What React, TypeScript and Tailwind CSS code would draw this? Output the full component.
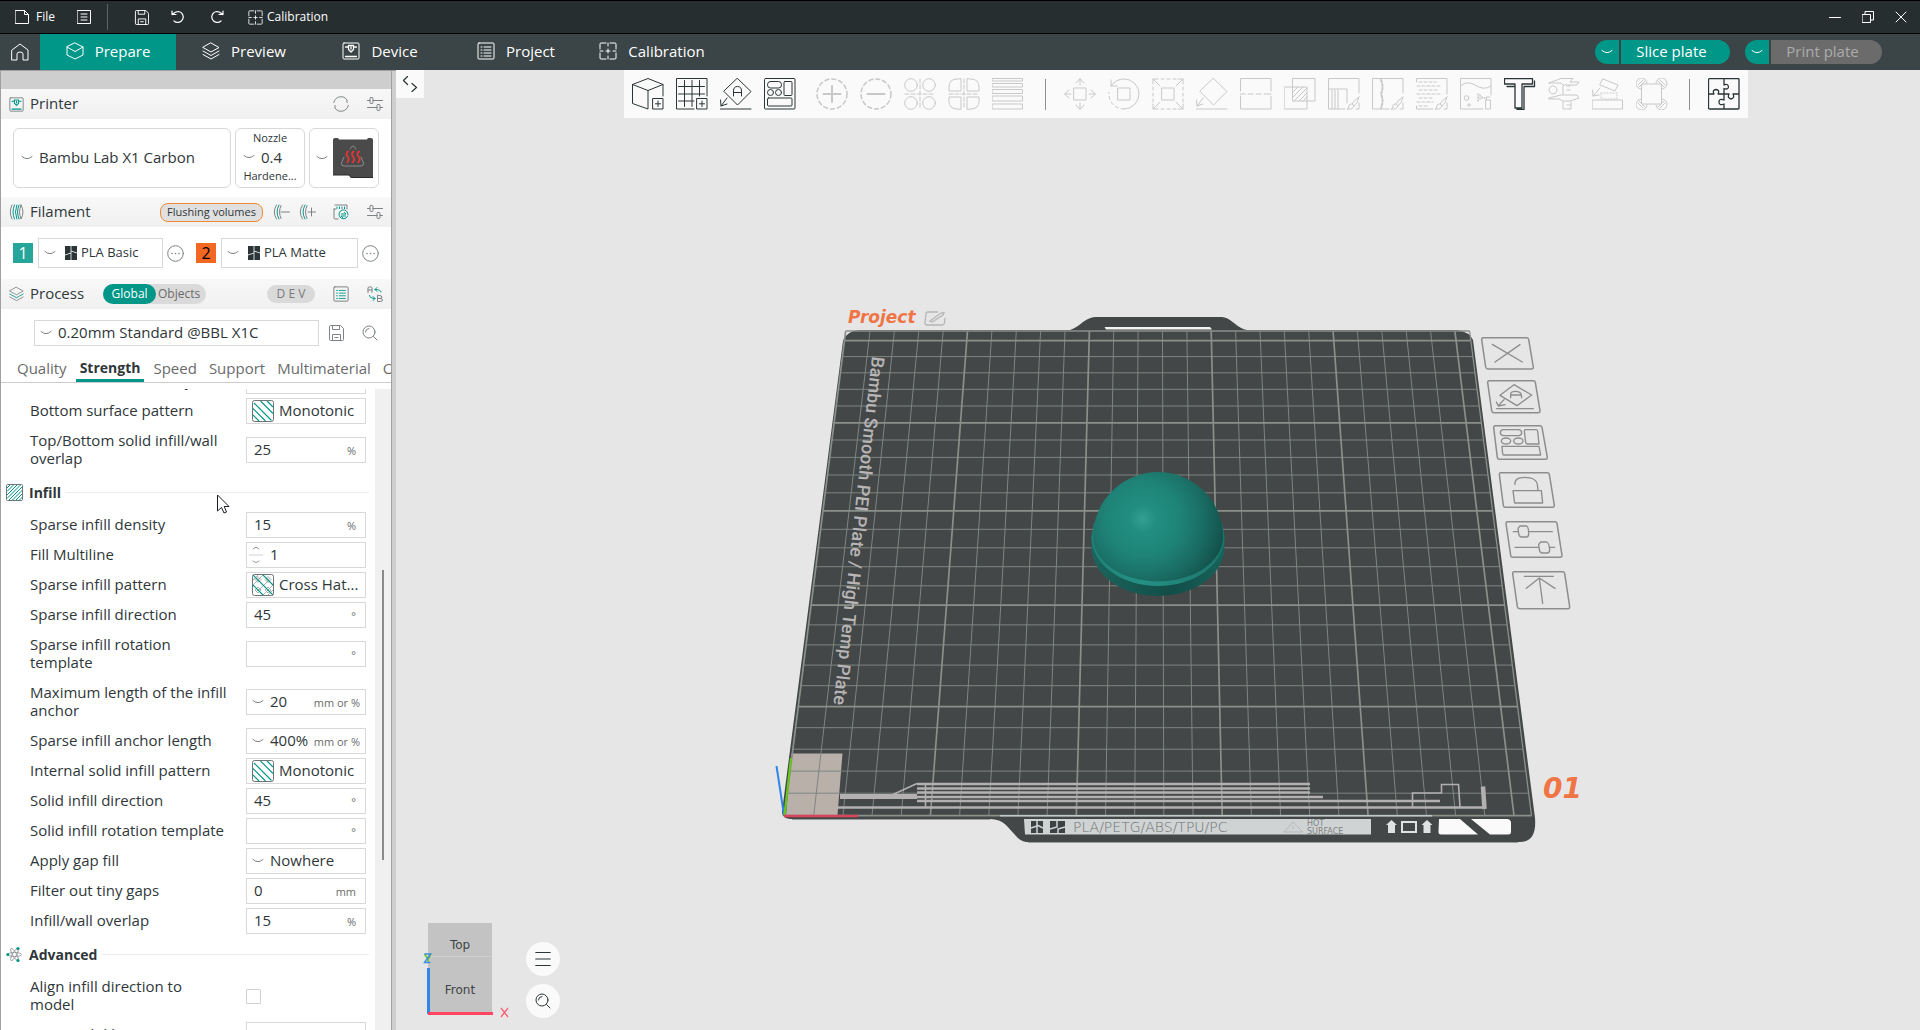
import React, { useState } from 'react';

type IconProps = { className?: string };

/* ---------- small icons ---------- */

const Svg: React.FC<{ box: string; className?: string; sw?: number; children: React.ReactNode }> = ({ box, className, sw = 1, children }) => (
  <svg viewBox={box} className={className} fill="none" stroke="currentColor" strokeWidth={sw} strokeLinecap="round" strokeLinejoin="round" aria-hidden="true">
    {children}
  </svg>
);

const Chevron: React.FC<IconProps> = ({ className = 'w-3 h-2 text-[#7d8385]' }) => (
  <Svg box="0 0 12 8" className={className}><path d="M1 2.5 Q6 7 11 2.5" /></Svg>
);

const SaveIcon: React.FC<IconProps> = ({ className }) => (
  <Svg box="0 0 16 16" className={className}><path d="M1.5 1.5Q1.5 .5 2.5 .5H12.500L15.500 3.500V14.500Q15.500 15.500 14.500 15.500H2.500Q1.500 15.500 1.500 14.500ZM4.500 15.500V9.500H12.500V15.500M4.500 .5V4.500H11.500V.5M7 12.500H10" /></Svg>
);

const CalibrationIcon: React.FC<IconProps> = ({ className }) => (
  <Svg box="0 0 18 18" className={className}>
    <path d="M7 1H2Q1 1 1 2V7M11 1H16Q17 1 17 2V7M1 11V16Q1 17 2 17H7M17 11V16Q17 17 16 17H11M9 1V4M9 14V17M1 9H4M14 9H17M9 7V11M7 9H11" />
  </Svg>
);

const PrinterIcon: React.FC<{ className?: string; head?: string }> = ({ className, head = 'currentColor' }) => (
  <Svg box="0 0 18 18" className={className}>
    <rect x="1" y="1" width="16" height="16" rx="1" />
    <path stroke={head} strokeWidth="1.300" d="M3.500 5H6.500M11.500 5H14.500M6.500 3.500H11.500V7.500L9 10L6.500 7.500ZM9 5V7M3.500 14.500H14.500" />
  </Svg>
);

const LayersIcon: React.FC<{ className?: string; low?: string }> = ({ className, low = 'currentColor' }) => (
  <Svg box="0 0 18 18" className={className}>
    <path d="M9 1L17 5.500L9 10L1 5.500Z" />
    <path stroke={low} d="M1 9L9 13.500L17 9" />
    <path d="M1 12.500L9 17L17 12.500" />
  </Svg>
);

const ListIcon: React.FC<{ className?: string; line?: string }> = ({ className, line = 'currentColor' }) => (
  <Svg box="0 0 18 18" className={className}>
    <rect x="1" y="1" width="16" height="16" rx="1" />
    <path stroke={line} d="M4 5H5M7 5H14M4 8H5M7 8H14M4 11H5M7 11H14M4 14H5M7 14H14" />
  </Svg>
);

const SlidersIcon: React.FC<IconProps> = ({ className }) => (
  <Svg box="0 0 16 16" className={className}>
    <path d="M.5 4.500H3M6 4.500H15.500M.5 11.500H10M13 11.500H15.500" />
    <rect x="3" y="1.500" width="3" height="6" rx="1" />
    <rect x="10" y="8.500" width="3" height="6" rx="1" />
  </Svg>
);

const SearchIcon: React.FC<IconProps> = ({ className }) => (
  <Svg box="0 0 16 16" className={className}>
    <circle cx="7" cy="7" r="6" />
    <path d="M11.500 11.500L15 15M3.500 7Q3.500 3.500 7 3.500" />
  </Svg>
);

const MoreIcon: React.FC<IconProps> = ({ className = 'size-[17px] text-[#7d8385]' }) => (
  <Svg box="0 0 17 17" className={className}>
    <circle cx="8.500" cy="8.500" r="7.800" />
    <path strokeWidth="1.500" d="M5 8.500H5.100M8.500 8.500H8.600M12 8.500H12.100" />
  </Svg>
);

const BambuMark: React.FC<IconProps> = ({ className = 'w-3 h-[14px]' }) => (
  <svg viewBox="0 0 12 14" className={className} aria-hidden="true">
    <rect width="12" height="14" fill="#2b3436" />
    <path d="M6 0V14M0 9L6 7M6 5L12 7" stroke="#fff" strokeWidth=".8" fill="none" />
  </svg>
);

const FilamentIcon: React.FC<IconProps> = ({ className }) => (
  <Svg box="0 0 15 16" className={className}>
    <path d="M3 1Q-.5 8 3 15M12 1Q16 8 12 15Q9 8 12 1" />
    <path stroke="#009688" d="M5.500 1Q2.500 8 5.500 15M7.800 1Q5 8 7.800 15M10 1Q7 8 10 15" />
  </Svg>
);

const FilamentEditIcon: React.FC<{ className?: string; plus?: boolean }> = ({ className, plus }) => (
  <Svg box="0 0 17 16" className={className}>
    <path d="M3.500 1Q-1 8 3.500 15" />
    <path stroke="#009688" d="M6 1Q2 8 6 15" />
    <path d={plus ? 'M8 1.500Q5 8 8 14.500M9 8H16.500M12.500 4V12' : 'M8 1.500Q5 8 8 14.500M8 8H16.500'} />
  </Svg>
);

const MonotonicIcon: React.FC<IconProps> = ({ className = 'size-[22px] shrink-0' }) => (
  <svg viewBox="0 0 22 22" className={className} fill="none" aria-hidden="true">
    <path stroke="#009688" strokeWidth="1.100" d="M1 15L7 21M1 8.500L13.500 21M2 3L19.500 20.500M8.500 1L21 13.500M15 1L21 7" />
    <rect x=".5" y=".5" width="21" height="21" rx="2" stroke="#6f7577" />
  </svg>
);

const CrossHatchIcon: React.FC<IconProps> = ({ className = 'size-[22px] shrink-0' }) => (
  <svg viewBox="0 0 22 22" className={className} fill="none" aria-hidden="true">
    <path stroke="#9a9fa0" strokeWidth=".8" d="M1 6L6 1M1 11L11 1M6 17L17 6M11 21L21 11M16 21L21 16M6 2.500L9 5.500L6 8.500L3 5.500ZM16 2.500L19 5.500L16 8.500L13 5.500ZM6 13L9 16L6 19L3 16ZM16 13L19 16L16 19L13 16ZM6 4.500L7 5.500L6 6.500L5 5.500ZM16 4.500L17 5.500L16 6.500L15 5.500ZM6 15L7 16L6 17L5 16ZM16 15L17 16L16 17L15 16Z" />
    <path stroke="#009688" strokeWidth="1.100" d="M1 1L21 21M11 1L21 11M1 11L11 21" />
    <rect x=".5" y=".5" width="21" height="21" rx="2" stroke="#6f7577" />
  </svg>
);

const InfillIcon = () => (
  <svg viewBox="0 0 17 17" className="size-[17px]" fill="none" aria-hidden="true">
    <path stroke="#009688" d="M1 4L4 1M1 7.500L7.500 1M1 11L11 1M1 14.500L14.500 1M2 17L17 2M5.500 17L17 5.500M9 17L17 9M12.500 17L17 12.500" />
    <rect x=".5" y=".5" width="16" height="16" rx="1" stroke="#6f7577" />
  </svg>
);

const AdvancedIcon = () => (
  <svg viewBox="0 0 17 17" className="size-[17px]" fill="none" stroke="#8b9092" strokeWidth=".8" aria-hidden="true">
    <ellipse cx="8.500" cy="8.500" rx="7" ry="2" />
    <ellipse cx="8.500" cy="8.500" rx="7" ry="2" transform="rotate(60 8.500 8.500)" />
    <ellipse cx="8.500" cy="8.500" rx="7" ry="2" transform="rotate(120 8.500 8.500)" />
    <g fill="#009688" stroke="none">
      <circle cx="1.800" cy="8.500" r="1.600" />
      <circle cx="12" cy="2.500" r="1.600" />
      <circle cx="12" cy="14.500" r="1.600" />
    </g>
  </svg>
);

/* ---------- toolbar drawings, all on a 32 grid ---------- */

const brush = 'M31 19Q26 22 24 26L26 28Q30 25 31 19M24 26Q20 26 21 29Q21 31 19 31Q25 32 26 28';
const tools: { name: string; on?: boolean; art: React.ReactNode }[][] = [
  [
    { name: 'Add model', on: true, art: <path d="M.5 6.500L16 .5L31 6.500V18M.5 6.500V25.500L16 31V12.500M.5 6.500L16 12.500L31 6.500M21 20.500H31V31H21ZM26 23V28.500M23.500 25.800H28.500" /> },
    { name: 'Add plate', on: true, art: <path d="M31 18V.5H.5V31H18M8.500 2.500V28.500M16 2.500V28.500M23.500 2.500V18M2.500 8.500H28.500M2.500 16H28.500M2.500 23H18M21 20.500H31V31H21ZM26 23V28.500M23.500 25.800H28.500" /> },
    { name: 'Auto orient', on: true, art: <path d="M17.500 .5L31 13.500L17.500 27L4 13.500ZM13.500 18V13Q13.500 8.500 17.500 8.500Q21.500 8.500 21.500 13V18M13.500 14.500H21.500M.5 31H31M7 20L1 28M.5 22L1 28L7 26" /> },
    { name: 'Arrange', on: true, art: <><rect x=".5" y=".5" width="30.500" height="30.500" rx="1" /><rect x="3.500" y="3.500" width="14" height="6.500" rx="3" /><rect x="20" y="3.500" width="8" height="14" rx="1" /><circle cx="6.500" cy="14.500" r="3" /><circle cx="14.500" cy="14.500" r="3" /><rect x="3.500" y="20" width="24.500" height="8" rx="1" /></> },
  ],
  [
    { name: 'Add instance', art: <><circle cx="16" cy="16" r="15" strokeDasharray="4 3" strokeWidth="1.500" /><path strokeWidth="2" d="M16 8V24M7.500 16H24.500" /></> },
    { name: 'Remove instance', art: <><circle cx="16" cy="16" r="15" strokeDasharray="4 3" strokeWidth="1.500" /><path strokeWidth="2" d="M7.500 16H24.500" /></> },
    { name: 'Split to objects', art: <><circle cx="7" cy="7" r="6.300" /><circle cx="25" cy="7" r="6.300" /><circle cx="7" cy="25" r="6.300" /><circle cx="25" cy="25" r="6.300" /><path strokeDasharray="4 2" d="M16 1V31M1 16H31" /></> },
    { name: 'Split to parts', art: <><path d="M13 1V13H1V9Q1 1 9 1ZM19 1V13H31V9Q31 1 23 1ZM13 31V19H1V23Q1 31 9 31ZM19 31V19H31V23Q31 31 23 31Z" /><path strokeDasharray="4 2" d="M16 1V31M1 16H31" /></> },
    { name: 'Variable layer height', art: <><rect x=".5" y=".5" width="30" height="2.500" /><rect x=".5" y="5.500" width="30" height="3.500" /><rect x=".5" y="11.500" width="30" height="4" /><rect x=".5" y="18" width="30" height="5" /><rect x=".5" y="26" width="30" height="5" /></> },
  ],
  [
    { name: 'Move', art: <path d="M10 10H22V22H10ZM16 7V1M12 5L16 .5L20 5M16 25V31M12 27L16 31.500L20 27M7 16H1M5 12L.5 16L5 20M25 16H31M27 12L31.500 16L27 20" /> },
    { name: 'Rotate', art: <><path d="M10 10H22V22H10ZM3 8Q8 1 16 1A15 15 0 0 1 16 31M3 2V8H9" /><path strokeDasharray="3 3" d="M16 31A15 15 0 0 1 1 14" /></> },
    { name: 'Scale', art: <><path d="M10 10H22V22H10ZM8 8L1 1M1 6V1H6M24 8L31 1M26 1H31V6M8 24L1 31M1 26V31H6M24 24L31 31M26 31H31V26" /><path strokeDasharray="3 3" d="M9 1H24M9 31H24M1 9V24M31 9V24" /></> },
    { name: 'Lay on face', art: <path d="M17.500 .5L31 13.500L17.500 27L4 13.500ZM.5 31H31M7 20L1 28M.5 22L1 28L7 26" /> },
    { name: 'Cut', art: <path d="M.5 13V.5H31V13M.5 18V31H31V18M.5 16H5M8 16H13M16 16H21M24 16H31" /> },
    { name: 'Mesh boolean', art: <path d="M8.500 9V.5H31V23H23M.5 9H23V31H.5ZM8.500 9V23H23M9 14L14 9M9 19L19 9M10 23L23 10M15 23L23 15M19 23L23 19" /> },
    { name: 'Support painting', art: <path d={'M31 15V.5H.5V31H17M.5 11H19V25M4 12V31M7 12V31M10 12V31M31 25V31H28' + brush} /> },
    { name: 'Seam painting', art: <><path d={'M31 15V.5H.5V31H17M31 25V31H28' + brush} /><path strokeDasharray="2 2" d="M9 2Q12 9 9 16Q12 23 9 30" strokeWidth="2" /></> },
    { name: 'Fuzzy skin', art: <><path d={'M.5 4V.5H31V16M.5 28V31H17M31 25V31H28' + brush} /><path strokeDasharray="3 2" d="M3 4H20M1 8H26M3 12H22M1 16H24M3 20H18M1 24H17M3 28H12" /></> },
    { name: 'Colour painting', art: <><path d="M31 17V.5H.5V31H23M.5 8Q7 2 15 7Q24 13 31 8M26 22H30.500V31H26ZM26.500 22V19H30" /><circle cx="6.500" cy="20" r="2.300" /><circle cx="9" cy="27" r="1.200" /><path strokeDasharray="1 2" d="M18 16V24M20 17V23M22 19V21M24 20H25" strokeWidth="1.500" /></> },
    { name: 'Text', on: true, art: <path strokeWidth="1.300" d="M.5 .5H28.500V6H18V30H11V6H.5ZM30.500 3V8.500H20M20 8.500V31.500H13M3 8.500H11" /> },
    { name: 'Measure', art: <path d="M1 5L13 .5H25L22 4H31L29 7H15L13 5H1ZM1 20L13 17H29L31 20L22 23H14L12 21H1ZM15 8V16M15 24V31H18M22 31H23V24M19 8H22M19 12H22M19 27H22M19 31H22M4 8A4 4 0 1 0 6 8Z" /> },
    { name: 'Assembly cut', art: <><path d="M.5 22H30.500V31H.5ZM11 1L26 7L23 13L8 7ZM8 10L1 18M.5 12L1 18L7 17" /><rect x="9" y="15" width="16" height="6" strokeDasharray="1 2" /></> },
    { name: 'Brim ears', art: <><rect x="5.500" y="6" width="20" height="20" rx="1" /><path d="M5 11A5.500 5.500 0 1 1 11 5M20 5A5.500 5.500 0 1 1 26 11M26 21A5.500 5.500 0 1 1 20 27M11 27A5.500 5.500 0 1 1 5 21M2 7L7 2M24 2L29 7M24 30L29 25M2 25L7 30M3 9L9 3M22 3L28 9M22 29L28 23M3 23L9 29" /></> },
  ],
  [
    { name: 'Assembly view', on: true, art: <path strokeWidth="1.300" d="M2 .5H30Q31 .5 31 1.500V30.500Q31 31 30 31H2Q.5 31 .5 30V2Q.5 .5 2 .5ZM16 .5V7Q20 5 20.500 9Q20 12 16 10.500V16M.5 16H6Q4 12 8 11.500Q12 12 10 16H21Q19 20 23 21Q27 20 25 16H31M16 16V22Q11 20 11 24Q11 28 16 26V31" /> },
  ],
];

/* ---------- top bars ---------- */

const TitleBar = () => (
  <header className="flex h-[34px] items-center border-y border-black bg-[#262e30] text-xs text-white">
    <button className="ml-[15px] flex items-center gap-[7px]">
      <Svg box="0 0 14 14" className="size-[14px]"><path d="M.5 .5H9.500L13.500 4.500V13.500H.5ZM9.500 .5V4.500H13.500" /></Svg>
      File
    </button>
    <button aria-label="Menu" className="ml-[22px]">
      <Svg box="0 0 14 14" className="size-[14px]"><path d="M.5 .5H13.500V13.500H.5ZM4 4H10M4 7H10M4 10H10" /></Svg>
    </button>
    <div className="ml-4 h-[26px] w-px bg-[#5d6466]" />
    <button aria-label="Save" className="ml-[26px]"><SaveIcon className="size-[15px]" /></button>
    <button aria-label="Undo" className="ml-[22px]">
      <Svg box="0 0 14 14" className="size-[14px]" sw={1.2}><path d="M1 1V4.500H5M1.500 4.500Q4 1.500 7.500 1.500A5.500 5.500 0 1 1 3 11" /></Svg>
    </button>
    <button aria-label="Redo" className="ml-[25px]">
      <Svg box="0 0 14 14" className="size-[14px]" sw={1.2}><path d="M13 1V4.500H9M12.500 4.500Q10 1.500 6.500 1.500A5.500 5.500 0 1 0 11 11" /></Svg>
    </button>
    <button className="ml-6 flex items-center gap-1"><CalibrationIcon className="size-[15px]" />Calibration</button>
    <div className="ml-auto mr-[13px] flex items-center gap-[21px]">
      <button aria-label="Minimize"><Svg box="0 0 12 12" className="size-3"><path d="M.5 6.500H11.500" /></Svg></button>
      <button aria-label="Restore"><Svg box="0 0 12 12" className="size-3"><path d="M.5 3.500H8.500V11.500H.5ZM3 3V.5H11.500V9H9" /></Svg></button>
      <button aria-label="Close"><Svg box="0 0 12 12" className="size-3"><path d="M1 1L11 11M11 1L1 11" /></Svg></button>
    </div>
  </header>
);

const NavBar = () => {
  const [active, setActive] = useState('Prepare');
  const tabs = [
    { name: 'Prepare', icon: <Svg box="0 0 18 18" className="size-[18px]"><path d="M9 1L17 5V13L9 17L1 13V5ZM1 5L9 9.500L17 5" /></Svg> },
    { name: 'Preview', icon: <LayersIcon className="size-[18px]" /> },
    { name: 'Device', icon: <PrinterIcon className="size-[18px]" /> },
    { name: 'Project', icon: <ListIcon className="size-[18px]" /> },
    { name: 'Calibration', icon: <CalibrationIcon className="size-[18px]" /> },
  ];

  return (
    <nav className="flex h-9 items-stretch bg-[#3b4446] text-[15px] text-white">
      <button aria-label="Home" className="flex w-10 items-center justify-center pb-px">
        <Svg box="0 0 18 18" className="size-[18px]"><path d="M1 7L9 1L17 7V17H12V11Q12 9 9 9Q6 9 6 11V17H1Z" /></Svg>
      </button>
      {tabs.map((t) => (
        <button
          key={t.name}
          onClick={() => setActive(t.name)}
          className={`flex w-[136px] items-center justify-center gap-[11px] pb-0.5 ${active === t.name ? 'bg-[#009688]' : ''}`}
        >
          {t.icon}
          {t.name}
        </button>
      ))}
      <div className="ml-auto mr-[38px] flex items-center gap-[15px]">
        <div className="flex h-6 gap-0.5">
          <button aria-label="Slice options" className="flex w-6 items-center justify-center rounded-l-full bg-[#009688]"><Chevron className="h-2 w-3" /></button>
          <button className="w-[109px] rounded-r-full bg-[#009688] pb-0.5 pr-2 leading-[22px]">Slice plate</button>
        </div>
        <div className="flex h-6 gap-0.5">
          <button aria-label="Print options" className="flex w-6 items-center justify-center rounded-l-full bg-[#009688]"><Chevron className="h-2 w-3" /></button>
          <button className="w-[111px] rounded-r-full bg-[#6b6b6b] pb-0.5 pr-2 leading-[22px] text-[#acacac]">Print plate</button>
        </div>
      </div>
    </nav>
  );
};

/* ---------- sidebar ---------- */

const SectionBar: React.FC<{ icon: React.ReactNode; title: string; children: React.ReactNode }> = ({ icon, title, children }) => (
  <div className="flex h-[30px] shrink-0 items-center bg-linear-to-b from-[#f8f8f8] to-[#f0f0f0] pl-2 pr-2">
    <span className="flex w-[15px] justify-center">{icon}</span>
    <h2 className="ml-1.5 pb-0.5">{title}</h2>
    {children}
  </div>
);

const FilamentSlot: React.FC<{ no: string; name: string; swatch: string; width: string }> = ({ no, name, swatch, width }) => (
  <>
    <button className={`size-5 text-base leading-5 ${swatch}`}>{no}</button>
    <div className={`relative ml-[5px] flex h-[30px] items-center border border-[#d8d8d8] ${width}`}>
      <Chevron className="pointer-events-none absolute left-[5px] h-2 w-3 text-[#7d8385]" />
      <BambuMark className="pointer-events-none absolute left-[26px] h-[14px] w-3" />
      <select aria-label={`Filament ${no}`} className="h-full w-full appearance-none bg-transparent pl-[42px] text-[13px] outline-none">
        <option>{name}</option>
      </select>
    </div>
    <button aria-label={`Edit filament ${no}`} className="ml-1"><MoreIcon /></button>
  </>
);

type Row = {
  label: string;
  kind: 'text' | 'combo' | 'pattern' | 'spin' | 'check' | 'select';
  value?: string;
  unit?: string;
  art?: React.ReactNode;
  tall?: boolean;
};

const surfaceRows: Row[] = [
  { label: 'Bottom surface density', kind: 'text', value: '100', unit: '%' },
  { label: 'Bottom surface pattern', kind: 'pattern', value: 'Monotonic', art: <MonotonicIcon /> },
  { label: 'Top/Bottom solid infill/wall overlap', kind: 'text', value: '25', unit: '%', tall: true },
];

const infillRows: Row[] = [
  { label: 'Sparse infill density', kind: 'text', value: '15', unit: '%' },
  { label: 'Fill Multiline', kind: 'spin', value: '1' },
  { label: 'Sparse infill pattern', kind: 'pattern', value: 'Cross Hat...', art: <CrossHatchIcon /> },
  { label: 'Sparse infill direction', kind: 'text', value: '45', unit: '°' },
  { label: 'Sparse infill rotation template', kind: 'text', value: '', unit: '°', tall: true },
  { label: 'Maximum length of the infill anchor', kind: 'combo', value: '20', unit: 'mm or %', tall: true },
  { label: 'Sparse infill anchor length', kind: 'combo', value: '400%', unit: 'mm or %' },
  { label: 'Internal solid infill pattern', kind: 'pattern', value: 'Monotonic', art: <MonotonicIcon /> },
  { label: 'Solid infill direction', kind: 'text', value: '45', unit: '°' },
  { label: 'Solid infill rotation template', kind: 'text', value: '', unit: '°' },
  { label: 'Apply gap fill', kind: 'select', value: 'Nowhere' },
  { label: 'Filter out tiny gaps', kind: 'text', value: '0', unit: 'mm' },
  { label: 'Infill/wall overlap', kind: 'text', value: '15', unit: '%' },
];

const advancedRows: Row[] = [
  { label: 'Align infill direction to\nmodel', kind: 'check', tall: true },
  { label: 'Insert solid layers', kind: 'text', value: '' },
];

const SettingRow: React.FC<{ row: Row }> = ({ row }) => {
  const id = row.label.toLowerCase().replace(/[^a-z]+/g, '-');
  const { kind, value, unit, art } = row;

  return (
    <div className={`flex shrink-0 items-center pl-[29px] ${row.tall ? 'h-12' : 'h-[30px]'}`}>
      <label htmlFor={id} className="w-[216px] shrink-0 whitespace-pre-line pb-0.5 pr-3 leading-[18px]">{row.label}</label>
      {kind === 'check' ? (
        <input id={id} type="checkbox" className="size-[15px] appearance-none rounded-[1px] border border-[#d0d0d0] bg-white" />
      ) : (
        <div className="flex h-[26px] w-[120px] items-center border border-[#d8d8d8] bg-white">
          {kind === 'pattern' && <span className="ml-[5px]">{art}</span>}
          {(kind === 'combo' || kind === 'select') && <Chevron className="ml-[5px] h-2 w-3 shrink-0 text-[#7d8385]" />}
          {kind === 'spin' && (
            <Svg box="0 0 14 20" className="ml-0.5 h-5 w-[14px] shrink-0 text-[#8f9496]">
              <path d="M4 4Q7 .5 10 4M4 16Q7 19 10 16" />
              <path stroke="#d0d0d0" d="M.5 10H13.500" />
            </Svg>
          )}
          {kind === 'pattern' || kind === 'select' ? (
            <select id={id} className={`min-w-0 flex-1 appearance-none bg-transparent pb-0.5 outline-none ${kind === 'pattern' ? 'pl-[5px]' : 'pl-1.5'}`}>
              <option>{value}</option>
            </select>
          ) : (
            <input
              id={id}
              type="text"
              defaultValue={value}
              className={`w-0 min-w-0 flex-1 bg-transparent pb-0.5 outline-none ${kind === 'combo' ? 'pl-1.5' : 'pl-[7px]'}`}
            />
          )}
          {unit && <span className={`shrink-0 pt-0.5 text-[11px] text-[#6b6b6b] ${kind === 'combo' ? 'pr-[5px]' : 'pr-[9px]'}`}>{unit}</span>}
        </div>
      )}
    </div>
  );
};

const GroupTitle: React.FC<{ icon: React.ReactNode; title: string }> = ({ icon, title }) => (
  <div className="flex h-9 shrink-0 items-center pl-[5px] pr-1.5 pt-px">
    {icon}
    <h3 className="ml-1.5 text-sm font-bold">{title}</h3>
    <div className="ml-[5px] h-px flex-1 bg-[#ececec]" />
  </div>
);

const Sidebar = () => (
  <aside className="flex w-[396px] shrink-0 border-l border-t border-[#a0a0a0] bg-[#cecece] text-[15px] text-[#2f373a]">
    <div className="flex min-w-0 flex-1 flex-col bg-white">
      <div className="h-[18px] shrink-0 bg-[#cecece]" />
      <SectionBar title="Printer" icon={<PrinterIcon className="size-[15px] text-[#6f7577]" head="#009688" />}>
        <button aria-label="Sync printer" className="ml-auto text-[#7d8385]">
          <Svg box="0 0 16 16" className="size-4"><path d="M.8 6.500A7.300 7.300 0 0 1 14 4V6.500M15.200 9.500A7.300 7.300 0 0 1 2 12V9.500" /></Svg>
        </button>
        <button aria-label="Printer settings" className="ml-[18px] text-[#7d8385]"><SlidersIcon className="size-4" /></button>
      </SectionBar>

      <div className="flex h-[78px] shrink-0 gap-1 pb-[9px] pl-3 pr-3 pt-[9px]">
        <div className="relative flex flex-1 items-center rounded-md border border-[#d8d8d8]">
          <Chevron className="pointer-events-none absolute left-[7px] h-2 w-3 text-[#7d8385]" />
          <select aria-label="Printer" className="h-full w-full appearance-none bg-transparent pb-0.5 pl-[25px] outline-none">
            <option>Bambu Lab X1 Carbon</option>
          </select>
        </div>
        <div className="flex w-[70px] flex-col items-center justify-center rounded-md border border-[#d8d8d8] pb-0.5 text-[11px]">
          <label htmlFor="nozzle" className="leading-[18px]">Nozzle</label>
          <div className="flex w-full items-center pl-[7px]">
            <Chevron className="h-2 w-3 shrink-0 text-[#7d8385]" />
            <select id="nozzle" className="ml-1.5 w-8 appearance-none bg-transparent text-[15px] leading-5 outline-none"><option>0.4</option></select>
          </div>
          <span className="leading-[18px]">Hardene...</span>
        </div>
        <button aria-label="Plate type" className="flex w-[70px] items-center gap-[5px] rounded-md border border-[#d8d8d8] pl-1.5">
          <Chevron />
          <svg viewBox="0 0 40 40" className="size-10" fill="none" aria-hidden="true">
            <path fill="#4a4a4a" d="M0 2Q0 0 2 0H5L6 1.500H34L35 0H38Q40 0 40 2V40H18L16 37H0Z" />
            <path stroke="#2a2a2a" d="M0 37H16L18 39.500H40" />
            <path stroke="#8a8a8a" strokeLinecap="round" d="M17 11Q18.500 8 20 8T23 11M11 19L8.500 25Q8 28 11 28H28Q31 28 30.500 25L28 19" />
            <path stroke="#e33" strokeWidth="1.700" d="M15.500 13Q12 16 14.500 18.500Q17 21 14 25M21 13Q17.500 16 20 18.500Q22.500 21 19.500 25M26.500 13Q23 16 25.500 18.500Q28 21 25 25" />
          </svg>
        </button>
      </div>

      <SectionBar title="Filament" icon={<FilamentIcon className="h-4 w-[15px] text-[#7d8385]" />}>
        <button className="ml-auto h-[19px] w-[103px] rounded-lg border border-[#f08a30] bg-[#e0e0e0] text-[11px] leading-4">Flushing volumes</button>
        <button aria-label="Remove filament" className="ml-2.5 text-[#7d8385]"><FilamentEditIcon className="h-4 w-[17px]" /></button>
        <button aria-label="Add filament" className="ml-[9px] text-[#7d8385]"><FilamentEditIcon plus className="h-4 w-[17px]" /></button>
        <button aria-label="Sync filament" className="ml-[17px] text-[#7d8385]">
          <Svg box="0 0 16 16" className="size-4">
            <path d="M2 1H14V5M1 5V14Q1 15 2 15H5M1 5H3" />
            <path stroke="#009688" d="M4 3V4.500M6.500 3V4.500M9 3V4.500M11.500 3V4.500M15 11A4.500 4.500 0 1 0 14.500 12.500M8.500 10H13L11.500 8.500M12.500 12H8L9.500 13.500" />
          </Svg>
        </button>
        <button aria-label="Filament settings" className="ml-[18px] text-[#7d8385]"><SlidersIcon className="size-4" /></button>
      </SectionBar>

      <div className="flex h-[52px] shrink-0 items-center pl-3">
        <FilamentSlot no="1" name="PLA Basic" swatch="bg-[#26a69a] text-white" width="w-[125px]" />
        <span className="w-3" />
        <FilamentSlot no="2" name="PLA Matte" swatch="bg-[#f26722] text-black" width="w-[137px]" />
      </div>

      <SectionBar title="Process" icon={<LayersIcon className="size-4 text-[#7d8385]" low="#009688" />}>
        <div className="ml-[19px] flex h-5 rounded-full bg-[#dadada] text-xs text-[#6b6b6b]">
          <button className="w-[53px] rounded-full bg-[#009688] text-white">Global</button>
          <button className="w-[50px] pr-1">Objects</button>
        </div>
        <button className="ml-auto h-[18px] w-12 rounded-full bg-[#dadada] text-xs leading-[18px] text-[#7b7b7b]">D E V</button>
        <button aria-label="Parameter list" className="ml-[18px] text-[#6f7577]"><ListIcon className="size-4" line="#009688" /></button>
        <button aria-label="Compare presets" className="ml-[18px] text-[#7d8385]">
          <Svg box="0 0 16 16" className="size-4">
            <path d="M1 6.500V2Q1 .8 3 .8Q5 .8 5 2V6.500M1 4H5M10.500 9.500V15.500H13Q15.500 15.500 15.500 14T13 12.500H10.500H12.500Q15 12.500 15 11T12.500 9.500Z" />
            <path stroke="#009688" d="M14 6Q14 3.500 8 3.500M10 1.500L8 3.500L10 5.500M2.500 9.500Q2.500 12.500 8 12.500M6 10.500L8 12.500L6 14.500" />
          </Svg>
        </button>
      </SectionBar>

      <div className="flex h-12 shrink-0 items-center pl-[33px] pr-[13px]">
        <div className="relative flex h-[26px] w-[285px] items-center border border-[#d8d8d8]">
          <Chevron className="pointer-events-none absolute left-[5px] h-2 w-3 text-[#7d8385]" />
          <select aria-label="Process preset" className="h-full w-full appearance-none bg-transparent pb-0.5 pl-[23px] outline-none">
            <option>0.20mm Standard @BBL X1C</option>
          </select>
        </div>
        <button aria-label="Save preset" className="ml-[9px] text-[#7d8385]"><SaveIcon className="size-4" /></button>
        <button aria-label="Search settings" className="ml-auto text-[#7d8385]"><SearchIcon className="size-4" /></button>
      </div>

      <div role="tablist" className="flex h-[26px] shrink-0 items-start overflow-hidden border-b border-[#cccccc] pl-4 pr-1 leading-[22px] text-[#6b6b6b]">
        <button role="tab" className="mr-[9px]">Quality</button>
        <button role="tab" aria-selected="true" className="mr-[9px] border-b-[3px] border-[#009688] px-1 text-sm leading-[22px] font-bold text-[#2f373a]">Strength</button>
        <button role="tab" className="mr-3">Speed</button>
        <button role="tab" className="mr-3">Support</button>
        <button role="tab" className="mr-3">Multimaterial</button>
        <div className="w-2 shrink-0 overflow-hidden"><button role="tab">Others</button></div>
      </div>

      <div className="mt-1.5 flex min-h-0 flex-1 overflow-hidden">
        <div className="-mt-[23px] flex flex-1 flex-col">
          {surfaceRows.map((r) => <SettingRow key={r.label} row={r} />)}
          <GroupTitle icon={<InfillIcon />} title="Infill" />
          {infillRows.map((r) => <SettingRow key={r.label} row={r} />)}
          <GroupTitle icon={<AdvancedIcon />} title="Advanced" />
          {advancedRows.map((r) => <SettingRow key={r.label} row={r} />)}
        </div>
        <div className="w-4 bg-[#f0f0f0] pt-[181px]">
          <div className="mx-auto h-[290px] w-0.5 bg-[#8a8a8a]" />
        </div>
      </div>
    </div>
    <div className="w-[5px] border-l border-[#a0a0a0]" />
  </aside>
);

/* ---------- 3D view ---------- */

// bed millimetres -> view position
const project = (u: number, v: number) => {
  const w = 1 + 0.000771 * v;
  return [(784.5 + 2.918 * u + 0.891 * v) / w, (815.7 - 1.638 * v) / w];
};

const gridLine = (u1: number, v1: number, u2: number, v2: number) => {
  const [x1, y1] = project(u1, v1);
  const [x2, y2] = project(u2, v2);
  return `M${x1.toFixed(1)} ${y1.toFixed(1)}L${x2.toFixed(1)} ${y2.toFixed(1)}`;
};

const steps = Array.from({ length: 26 }, (_, i) => i * 10);
const pathFor = (list: number[]) => list.map((s) => gridLine(s, 0, s, 256) + gridLine(0, s, 256, s)).join('');
const fineGrid = pathFor(steps.filter((s) => s % 50 !== 0));
const boldGrid = pathFor(steps.filter((s) => s % 50 === 0));
const border = gridLine(0, 256, 256, 256) + gridLine(256, 0, 256, 256);

const BuildPlate = () => (
  <svg viewBox="708 300 900 560" className="h-[560px] w-[900px]" fill="none" role="img" aria-label="Build plate">
    <defs>
      <radialGradient id="dome" gradientUnits="userSpaceOnUse" cx="1143" cy="519" r="84">
        <stop offset="0" stopColor="#339f94" />
        <stop offset=".16" stopColor="#218e82" />
        <stop offset=".45" stopColor="#1f8377" />
        <stop offset=".75" stopColor="#196a61" />
        <stop offset="1" stopColor="#124f49" />
      </radialGradient>
      <linearGradient id="rim" x1="0" x2="1">
        <stop offset="0" stopColor="#1a655d" />
        <stop offset=".6" stopColor="#134d48" />
        <stop offset="1" stopColor="#17635b" />
      </linearGradient>
      <linearGradient id="lip" x1="0" x2="1">
        <stop offset="0" stopColor="#1f8478" />
        <stop offset=".4" stopColor="#259084" />
        <stop offset="1" stopColor="#1b756b" />
      </linearGradient>
    </defs>

    <path fill="#434747" d="M860 330H1070Q1076 328 1083 322Q1090 317 1096 317H1222Q1227 317 1234 323Q1241 329 1247 330H1457Q1470 332 1473 340L1535 818Q1537 842 1520 842H1026Q1020 841 1016 836L1006 825Q1000 819 990 819H790Q782 818 782 812L843 341Q846 331 860 330Z" />
    <path stroke="#9aa09e" d="M1028 842.500H1518M792 819.500H990" />
    <path fill="#f2f2f2" d="M1104.500 327H1210L1212 329.500H1106Z" />
    <path fill="#b9b0aa" d="M791.500 753.500H842.500L837.500 815H786Z" />
    <path stroke="#7f8581" strokeWidth="1" d={fineGrid} />
    <path stroke="#8b908a" strokeWidth="1.700" d={boldGrid} />
    <path stroke="#8b908a" strokeWidth="1.300" d={border} />
    <path stroke="#bfc8c6" strokeWidth="1.500" d="M1000 815.700H1432" />

    {/* heater traces */}
    <g stroke="#b3b0b1" strokeWidth="2.400">
      <path strokeWidth="5" d="M840 796.500H917" />
      <path d="M917 784H1310M917 788.500H1310M917 792.500H1310M917 797H1323M917 801H1440M838 807.500H1486" />
      <path strokeWidth="1.600" d="M893 794.500L917 783.500M925.500 784V807M1412.500 807V793H1441.500V784.500H1458.500L1460 807" />
      <path strokeWidth="4.500" d="M1483 786.500L1484.500 809" />
    </g>

    {/* origin axes */}
    <path stroke="#2f86ea" strokeWidth="2" d="M776.500 766L784 815" />
    <path stroke="#66c61a" strokeWidth="2.200" d="M791 758L784.500 815" />
    <path stroke="#d9445c" strokeWidth="2.500" d="M784 816H858" />

    <text transform="translate(872 356) rotate(96.300)" className="font-['Roboto',sans-serif] text-[18px] font-medium" fill="#b7b5b6">
      Bambu Smooth PEI Plate / High Temp Plate
    </text>

    {/* front label */}
    <path fill="#d0d3d3" d="M1024 819H1371V834.500H1025Z" />
    <path fill="#3c4243" d="M1031 821H1043V833H1031ZM1050 821H1065V833H1050Z" />
    <path stroke="#d0d3d3" strokeWidth="1.500" d="M1037 821V833M1031 828L1037 826M1037 825L1043 828M1050 829L1057 827V821M1058 833V829L1065 827" />
    <text x="1073" y="832" className="font-['DejaVu_Sans',sans-serif] text-[14px] font-extralight" fill="#6c7273">PLA/PETG/ABS/TPU/PC</text>
    <path stroke="#b4b9ba" d="M1284 832H1303L1293 822ZM1293 826V829" />
    <text x="1307" y="826" className="font-['DejaVu_Sans',sans-serif] text-[8px]" fill="#7c8283">HOT</text>
    <text x="1307" y="834" className="font-['DejaVu_Sans',sans-serif] text-[8px]" fill="#7c8283">SURFACE</text>
    <path fill="#dfe2e2" d="M1391.500 820L1397 825H1395V833H1388V825H1386ZM1427 820L1432.500 825H1430.500V833H1423.500V825H1421.500Z" />
    <path stroke="#dfe2e2" strokeWidth="2" d="M1402 822H1416V832H1402Z" />
    <path fill="#fafafa" d="M1439 819H1460L1478 834.500H1441Q1438.500 834.500 1438.500 832ZM1471 819H1507Q1510 819 1511 822V832Q1511 834.500 1508 834.500H1490Z" />

    {/* model */}
    <path fill="url(#rim)" d="M1091.500 535V547A66.500 49 0 0 0 1224.500 547V535Z" />
    <path fill="url(#lip)" d="M1091.500 537A66.500 49 0 0 0 1224.500 537L1222 523H1094Z" />
    <path fill="url(#dome)" d="M1093 537A65 65 0 0 1 1223 537A65 44.500 0 0 1 1093 537Z" />

    <text x="848" y="323" className="font-['DejaVu_Sans',sans-serif] text-[17px] font-bold italic" fill="#f07546">Project</text>
    <path stroke="#b5b5b5" strokeWidth="1.300" d="M938 312H928Q926 312 926 314L925 323Q925 325 927 325H942Q944 325 944.500 323L945 318M930 321L941 313L944 312.500L943 315L932 322Z" />
    <text x="1543" y="798" className="font-['DejaVu_Sans',sans-serif] text-[28px] font-bold italic" fill="#f07546">01</text>
  </svg>
);

const plateButtons = [
  { name: 'Delete plate', pos: 'left-[772px] top-[36px]', box: '840 107 183 120', frame: 'M849 112H979Q985 112 986 117L1000 200Q1000 206 995 206H864Q858 206 857 200L845 118Q845 112 849 112Z', art: 'M877 132L967 185M960 133L885 185' },
  { name: 'Orient plate', pos: 'left-[778px] top-[79px]', box: '858 238 183 120', frame: 'M867 243H1000Q1005 243 1006 248L1020 333Q1020 339 1015 339H881Q876 339 875 333L863 249Q863 243 867 243Z', art: 'M942 255L995 286L951 318L900 287ZM932 294V284Q932 275 946 275Q962 275 964 286L965 294M932 286H964M890 327H1000M912 300L895 318M889 307L895 319L915 315' },
  { name: 'Arrange plate', pos: 'left-[784px] top-[124px]', box: '876 373 183 120', frame: 'M885 378H1020Q1025 378 1026 383L1042 473Q1042 479 1037 479H898Q893 479 892 473L881 384Q881 378 885 378Z', art: 'M909 390H956Q965 392 965 399T957 408H911Q901 406 901 399T909 390ZM975 390H1008Q1012 390 1013 395L1017 433H982Q978 433 977 428L973 394ZM904 424A14 9 0 1 0 932 424A14 9 0 1 0 904 424ZM941 424A14 9 0 1 0 969 424A14 9 0 1 0 941 424ZM906 440H1017L1022 466H912Q908 466 908 462Z' },
  { name: 'Lock plate', pos: 'left-[790px] top-[171px]', box: '894 513 183 120', frame: 'M902 518H1042Q1047 518 1048 523L1063 616Q1063 622 1058 622H916Q911 622 910 616L898 524Q898 518 902 518Z', art: 'M945 553Q942 532 975 532Q1008 532 1012 553L1014 572M939 572H1024L1028 609H944Z' },
  { name: 'Plate settings', pos: 'left-[796px] top-[220px]', box: '912 659 183 120', frame: 'M922 664H1065Q1070 664 1071 669L1086 765Q1086 771 1081 771H938Q933 771 932 765L918 670Q918 664 922 664Z', art: 'M940 694H954M986 694H1057M945 741H1016M1049 741H1064M960 677H980Q986 680 986 702Q985 710 979 710H964Q957 709 956 700L954 684ZM1022 725H1040Q1048 728 1049 750Q1048 758 1041 758H1026Q1019 757 1018 748L1016 732Z' },
  { name: 'Move plate to front', pos: 'left-[803px] top-[270px]', box: '933 810 183 120', frame: 'M942 815H1088Q1093 815 1094 820L1109 920Q1109 926 1104 926H959Q953 926 952 920L938 821Q938 815 942 815Z', art: 'M973 829H1060M1018 834L1028 910M979 865L1018 834L1065 865' },
];

const Toolbar = () => (
  <div className="flex h-12 items-center bg-[#fafafa] px-2">
    {tools.map((group, g) => (
      <React.Fragment key={g}>
        {g === 1 && <span className="w-5" />}
        {g > 1 && <span className="ml-[21px] mr-[18px] h-[31px] w-px bg-[#8a8f91]" />}
        <div className="flex gap-3">
          {group.map((t) => (
            <button key={t.name} aria-label={t.name} disabled={!t.on} className={`size-8 ${t.on ? 'text-[#2b3436]' : 'text-[#c8c8c8]'}`}>
              <Svg box="0 0 32 32" className="size-8">{t.art}</Svg>
            </button>
          ))}
        </div>
      </React.Fragment>
    ))}
  </div>
);

const ViewCube = () => (
  <svg viewBox="420 918 96 104" className="h-[104px] w-24" fill="none" role="img" aria-label="View cube">
    <path fill="#c3c3c3" d="M428 923H492V1014H428Z" />
    <path stroke="#cfcfcf" d="M428 956.500H492" />
    <path stroke="#2f86ea" strokeWidth="3" d="M428.500 968V1014" />
    <path stroke="#ff4560" strokeWidth="3" d="M428 1013.500H493" />
    <g className="font-['DejaVu_Sans',sans-serif] text-xs" fill="#3f4445" textAnchor="middle">
      <text x="460" y="949">Top</text>
      <text x="460" y="994">Front</text>
    </g>
    <path stroke="#66c61a" strokeWidth="1.500" d="M424.500 954L428 959L431 954M428 959V963" />
    <path stroke="#3b8ee0" strokeWidth="1.500" d="M424.500 954H430.500L424.500 962.500H430.500" />
    <path stroke="#ff6074" strokeWidth="1.300" d="M501 1008L508 1017M508 1008L501 1017" />
  </svg>
);

const Viewport = () => (
  <main className="relative min-w-0 flex-1 overflow-hidden bg-[#e6e6e6]">
    <div className="flex items-start">
      <button aria-label="Collapse sidebar" className="flex h-7 w-7 items-center justify-center bg-[#fafafa] text-[#2b3436]">
        <Svg box="0 0 16 16" className="size-4" sw={1.2}><path d="M5.500 .5L1.500 4.500L5.500 8.500M10 7.500L14.500 11.500L10 15.500" /></Svg>
      </button>
      <div className="flex flex-1 justify-center pl-7"><Toolbar /></div>
    </div>

    <div className="absolute left-1/2 top-[230px] -translate-x-1/2">
      <BuildPlate />
      {plateButtons.map((b) => (
        <button key={b.name} aria-label={b.name} className={`absolute h-10 w-[61px] text-[#8d8d8d] ${b.pos}`}>
          <svg viewBox={b.box} className="h-full w-full" fill="none" stroke="currentColor" strokeWidth="4.500" strokeLinecap="round" strokeLinejoin="round">
            <path d={b.frame} />
            <path strokeWidth="4" d={b.art} />
          </svg>
        </button>
      ))}
    </div>

    <div className="absolute bottom-2 left-6 flex items-end gap-[10px]">
      <ViewCube />
      <div className="flex flex-col gap-2 pb-1">
        <button aria-label="View options" className="flex size-[34px] items-center justify-center rounded-full bg-[#fafafa] text-[#2b3436]">
          <Svg box="0 0 16 16" className="size-4" sw={1.2}><path d="M.8 1.500H15.200M.8 8H15.200M.8 14.500H15.200" /></Svg>
        </button>
        <button aria-label="Zoom to fit" className="flex size-[34px] items-center justify-center rounded-full bg-[#fafafa] text-[#2b3436]">
          <SearchIcon className="size-4" />
        </button>
      </div>
    </div>
  </main>
);

const App: React.FC = () => (
  <div className="relative flex h-screen flex-col overflow-hidden font-['Open_Sans','Noto_Sans',sans-serif]">
    <TitleBar />
    <NavBar />
    <div className="flex min-h-0 flex-1">
      <Sidebar />
      <Viewport />
    </div>
    {/* pointer */}
    <svg viewBox="0 0 13 20" className="pointer-events-none absolute left-[217px] top-[494px] h-5 w-[13px]" aria-hidden="true">
      <path fill="#fff" stroke="#1c1f26" d="M.5 1V17L4.500 13.500L7 19L9.500 18L7.200 12.500H12Z" />
    </svg>
  </div>
);

export default App;
